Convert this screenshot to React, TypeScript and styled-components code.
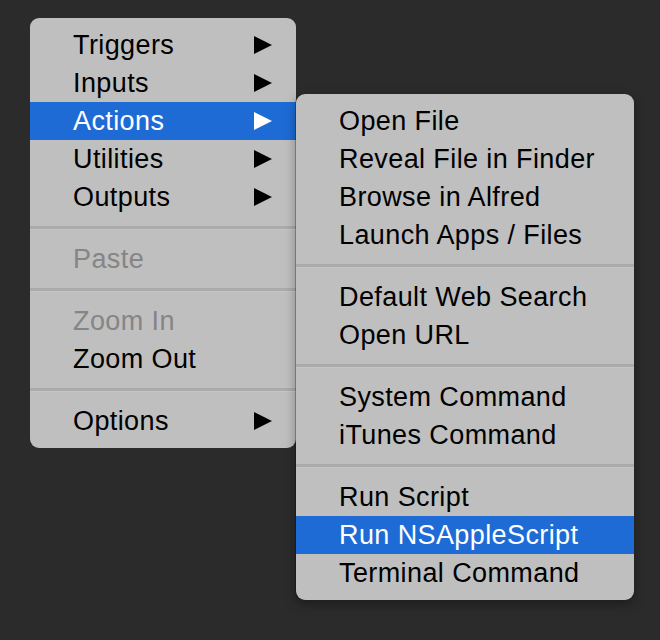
import React from 'react';
import styled, {createGlobalStyle} from 'styled-components';

const GlobalStyle = createGlobalStyle`
  html, body {
    margin: 0;
    background: #2b2b2b;
  }
  body {
    font-family: "Liberation Sans", Arial, Helvetica, sans-serif;
  }
`;

const Desktop = styled.div`
  width: 660px;
  height: 640px;
  box-sizing: border-box;
  padding: 18px 0 0 30px;
  background: #2b2b2b;
  overflow: hidden;
`;

const Anchor = styled.div`
  position: relative;
  width: 266px;
`;

const Menu = styled.div<{ $width: number }>`
  width: ${p => p.$width}px;
  box-sizing: border-box;
  padding: 8px 0;
  background: #bfbfbf;
  border-radius: 9px;
  display: flex;
  flex-direction: column;
`;

const SubMenu = styled(Menu)`
  position: absolute;
  left: 266px;
  top: 76px;
  box-shadow: -1px 0 0 rgba(0, 0, 0, 0.25), 0 4px 12px rgba(0, 0, 0, 0.35);
`;

const Row = styled.div<{ $active?: boolean; $disabled?: boolean }>`
  height: 38px;
  display: flex;
  align-items: center;
  justify-content: space-between;
  padding: 0 24px 0 43px;
  background: ${p => (p.$active ? '#1e6bd6' : 'transparent')};
  color: ${p => (p.$active ? '#ffffff' : p.$disabled ? '#858585' : '#000000')};
  font-size: 27px;
  letter-spacing: 0.4px;
  line-height: 38px;
  white-space: nowrap;
`;

const Separator = styled.div`
  height: 24px;
  display: flex;
  align-items: center;
  &::after {
    content: '';
    flex: 1;
    height: 3px;
    background: #ababab;
    border-bottom: 1px solid #c6c6c6;
  }
`;

const Arrow = ({color}: { color: string }) => (
  <svg width="18" height="18" viewBox="0 0 18 18">
    <polygon points="0,0 18,9 0,18" fill={color}/>
  </svg>
);

type Item = { label: string; sub?: boolean; active?: boolean; disabled?: boolean } | 'sep';

const mainItems: Item[] = [
  {label: 'Triggers', sub: true},
  {label: 'Inputs', sub: true},
  {label: 'Actions', sub: true, active: true},
  {label: 'Utilities', sub: true},
  {label: 'Outputs', sub: true},
  'sep',
  {label: 'Paste', disabled: true},
  'sep',
  {label: 'Zoom In', disabled: true},
  {label: 'Zoom Out'},
  'sep',
  {label: 'Options', sub: true},
];

const actionItems: Item[] = [
  {label: 'Open File'},
  {label: 'Reveal File in Finder'},
  {label: 'Browse in Alfred'},
  {label: 'Launch Apps / Files'},
  'sep',
  {label: 'Default Web Search'},
  {label: 'Open URL'},
  'sep',
  {label: 'System Command'},
  {label: 'iTunes Command'},
  'sep',
  {label: 'Run Script'},
  {label: 'Run NSAppleScript', active: true},
  {label: 'Terminal Command'},
];

const renderItems = (items: Item[]) =>
  items.map((item, i) =>
    item === 'sep' ? (
      <Separator key={i}/>
    ) : (
      <Row key={i} $active={item.active} $disabled={item.disabled}>
        <span>{item.label}</span>
        {item.sub && <Arrow color={item.active ? '#ffffff' : '#000000'}/>}
      </Row>
    )
  );

export default function App() {
  return (
    <>
      <GlobalStyle/>
      <Desktop>
        <Anchor>
          <Menu $width={266}>{renderItems(mainItems)}</Menu>
          <SubMenu $width={338}>{renderItems(actionItems)}</SubMenu>
        </Anchor>
      </Desktop>
    </>
  );
}
